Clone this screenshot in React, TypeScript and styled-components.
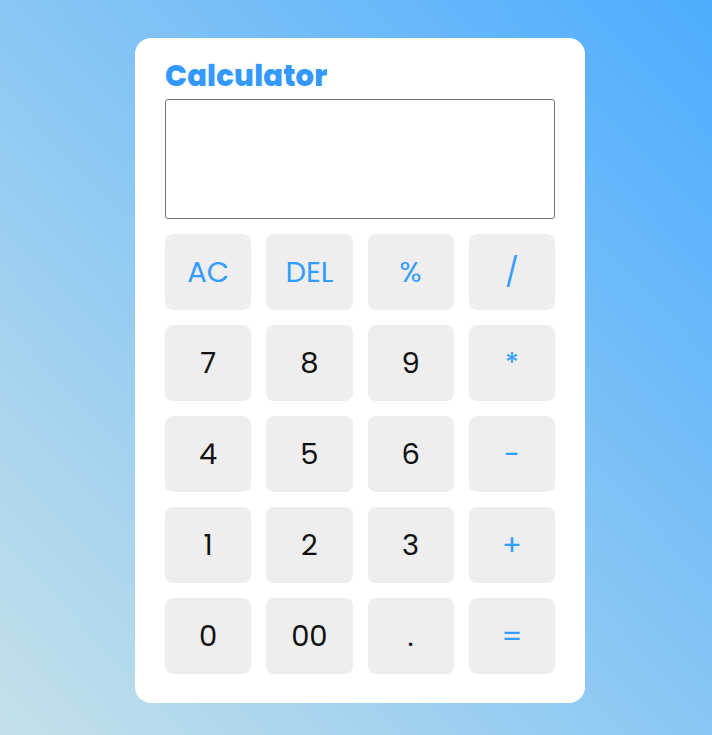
import styled, {createGlobalStyle} from 'styled-components';

const GlobalStyle = createGlobalStyle`
  * {
    box-sizing: border-box;
  }
  html, body {
    margin: 0;
    padding: 0;
  }
  body {
    font-family: 'Poppins', 'Lato', 'Noto Sans', sans-serif;
    min-height: 735px;
    background: linear-gradient(to top right, #c4e1ea, #4eacfe);
  }
`;

const Page = styled.div`
  min-height: 735px;
  display: flex;
  justify-content: center;
  align-items: flex-start;
  padding: 38px 0 0 8px;
`;

const Card = styled.div`
  width: 450px;
  background: #fff;
  border-radius: 16px;
  padding: 20px 30px 29px;
  display: flex;
  flex-direction: column;
`;

const Title = styled.h1`
  margin: 0 0 4px;
  font-size: 29px;
  line-height: 37px;
  font-weight: 800;
  color: #3399ff;
  letter-spacing: 0.2px;
`;

const Display = styled.input`
  flex-shrink: 0;
  width: 390px;
  height: 120px;
  border: 1px solid #767676;
  border-radius: 3px;
  margin: 0 0 15px;
  font-family: inherit;
  font-size: 32px;
  text-align: right;
  padding: 0 12px;
  outline: none;
`;

const Keys = styled.div`
  display: grid;
  grid-template-columns: repeat(4, 1fr);
  grid-auto-rows: 76px;
  gap: 15px;
  width: 390px;
`;

const Key = styled.button<{$op?: boolean}>`
  border: none;
  border-radius: 8px;
  background: #eeeeee;
  font-family: inherit;
  font-size: 29px;
  font-weight: 400;
  color: ${p => (p.$op ? '#339cff' : '#111')};
  cursor: pointer;
  display: flex;
  align-items: center;
  justify-content: center;
  padding: 0;
`;

const keys: {label: string; op?: boolean}[] = [
  {label: 'AC', op: true},
  {label: 'DEL', op: true},
  {label: '%', op: true},
  {label: '/', op: true},
  {label: '7'},
  {label: '8'},
  {label: '9'},
  {label: '*', op: true},
  {label: '4'},
  {label: '5'},
  {label: '6'},
  {label: '-', op: true},
  {label: '1'},
  {label: '2'},
  {label: '3'},
  {label: '+', op: true},
  {label: '0'},
  {label: '00'},
  {label: '.'},
  {label: '=', op: true},
];

export default function App() {
  return (
    <>
      <GlobalStyle />
      <Page>
        <Card>
          <Title>Calculator</Title>
          <Display type="text" readOnly />
          <Keys>
            {keys.map(k => (
              <Key key={k.label} $op={k.op}>
                {k.label}
              </Key>
            ))}
          </Keys>
        </Card>
      </Page>
    </>
  );
}
